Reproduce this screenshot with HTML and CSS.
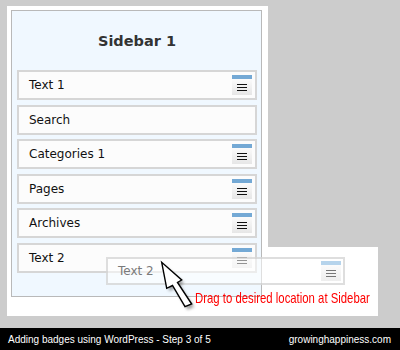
FILE: index.html
```html
<!DOCTYPE html>
<html lang="en">
<head>
  <meta charset="UTF-8" />
  <meta name="viewport" content="width=device-width, initial-scale=1.0" />
  <title>Adding badges - Step 3</title>
  <link rel="stylesheet" href="styles.css">
</head>
<body>
  <div class="stage">
    <div class="panel">
      <div class="sidebar">
        <h2 class="sidebar-title">Sidebar 1</h2>
        <ul class="widgets">
          <li class="widget"><span>Text 1</span><span class="handle"><b></b><i><em></em></i></span></li>
          <li class="widget"><span>Search</span></li>
          <li class="widget"><span>Categories 1</span><span class="handle"><b></b><i><em></em></i></span></li>
          <li class="widget"><span>Pages</span><span class="handle"><b></b><i><em></em></i></span></li>
          <li class="widget"><span>Archives</span><span class="handle"><b></b><i><em></em></i></span></li>
          <li class="widget"><span>Text 2</span><span class="handle"><b></b><i><em></em></i></span></li>
        </ul>
      </div>
    </div>

    <div class="callout-bg"></div>

    <div class="widget ghost"><span>Text 2</span><span class="handle"><b></b><i><em></em></i></span></div>

    <svg class="cursor" width="50" height="62" viewBox="0 0 50 62">
      <defs>
        <filter id="soft" x="-30%" y="-30%" width="160%" height="160%">
          <feGaussianBlur stdDeviation="1.6" />
        </filter>
      </defs>
      <polygon points="11.7,7.3 16.7,33.3 22.5,30.5 35,51.7 41.7,49 27.5,27.5 31.7,25" fill="#555" opacity="0.55" filter="url(#soft)" transform="translate(2.5 3)" />
      <polygon points="11.7,7.3 16.7,33.3 22.5,30.5 35,51.7 41.7,49 27.5,27.5 31.7,25" fill="#fff" stroke="#000" stroke-width="1.4" stroke-linejoin="miter" />
    </svg>

    <p class="caption">Drag to desired location at Sidebar</p>
  </div>

  <div class="footer">
    <span>Adding badges using WordPress - Step 3 of 5</span>
    <span>growinghappiness.com</span>
  </div>
</body>
</html>
```

FILE: styles.css
```css
* {
  box-sizing: border-box;
}

body {
  margin: 0;
  width: 400px;
  height: 350px;
  overflow: hidden;
  background: #cccccc;
  font-family: 'DejaVu Sans', Verdana, sans-serif;
}

.stage {
  position: relative;
  height: 328px;
  padding: 6px 0 0 7px;
}

.panel {
  width: 261px;
  height: 310px;
  padding: 4px 6px 0 4px;
  background: #fff;
}

.sidebar {
  height: 287px;
  border: 1px solid #b9b9b9;
  background: #f0f8ff;
  padding: 0 4px 0 5px;
}

.sidebar-title {
  margin: 0;
  padding: 21px 0 20px;
  font-size: 14.5px;
  line-height: 18px;
  font-weight: bold;
  color: #333;
  text-align: center;
}

.widgets {
  list-style: none;
  margin: 0;
  padding: 0;
  display: flex;
  flex-direction: column;
  gap: 4.6px;
}

.widget {
  display: flex;
  align-items: center;
  justify-content: space-between;
  height: 30px;
  padding: 0 3px 0 10px;
  border: 2px solid #d6d6d6;
  background: #fcfcfc;
  font-size: 12px;
  color: #111;
}

.handle {
  display: flex;
  flex-direction: column;
  width: 20px;
  height: 20px;
}

.handle b {
  height: 4px;
  background: #74a9d5;
}

.handle i {
  flex: 1;
  display: flex;
  justify-content: center;
  padding-top: 5px;
  background: linear-gradient(#fbfbfb, #e6e6e6);
}

.handle em {
  width: 10px;
  height: 7px;
  border-top: 1px solid #111;
  border-bottom: 1px solid #111;
  background: linear-gradient(#111, #111) center / 100% 1px no-repeat;
}

.callout-bg {
  position: absolute;
  left: 268px;
  top: 247px;
  width: 110px;
  height: 69px;
  background: #fff;
}

.ghost {
  position: absolute;
  left: 106px;
  top: 257px;
  width: 239px;
  height: 28px;
  padding-right: 2px;
  border-color: rgba(200, 200, 200, 0.6);
  background: rgba(255, 255, 255, 0.55);
  color: #7a7a7a;
}

.ghost .handle b {
  background: #b6d4ec;
}

.ghost .handle i {
  background: linear-gradient(rgba(250, 250, 250, 0.7), rgba(230, 230, 230, 0.7));
}

.ghost .handle em {
  border-color: #777;
  background: linear-gradient(#777, #777) center / 100% 1px no-repeat;
}

.cursor {
  position: absolute;
  left: 150px;
  top: 255px;
}

.caption {
  position: absolute;
  left: 195px;
  top: 289px;
  margin: 0;
  font-family: 'Liberation Sans', Arial, sans-serif;
  font-size: 15px;
  line-height: 18px;
  color: #ff0000;
  white-space: nowrap;
  transform: scaleX(0.757);
  transform-origin: left center;
}

.footer {
  display: flex;
  justify-content: space-between;
  align-items: center;
  height: 22px;
  padding: 0 9px 0 8px;
  background: #000;
  color: #fff;
  font-family: 'Liberation Sans', Arial, sans-serif;
  font-size: 10px;
}
```
